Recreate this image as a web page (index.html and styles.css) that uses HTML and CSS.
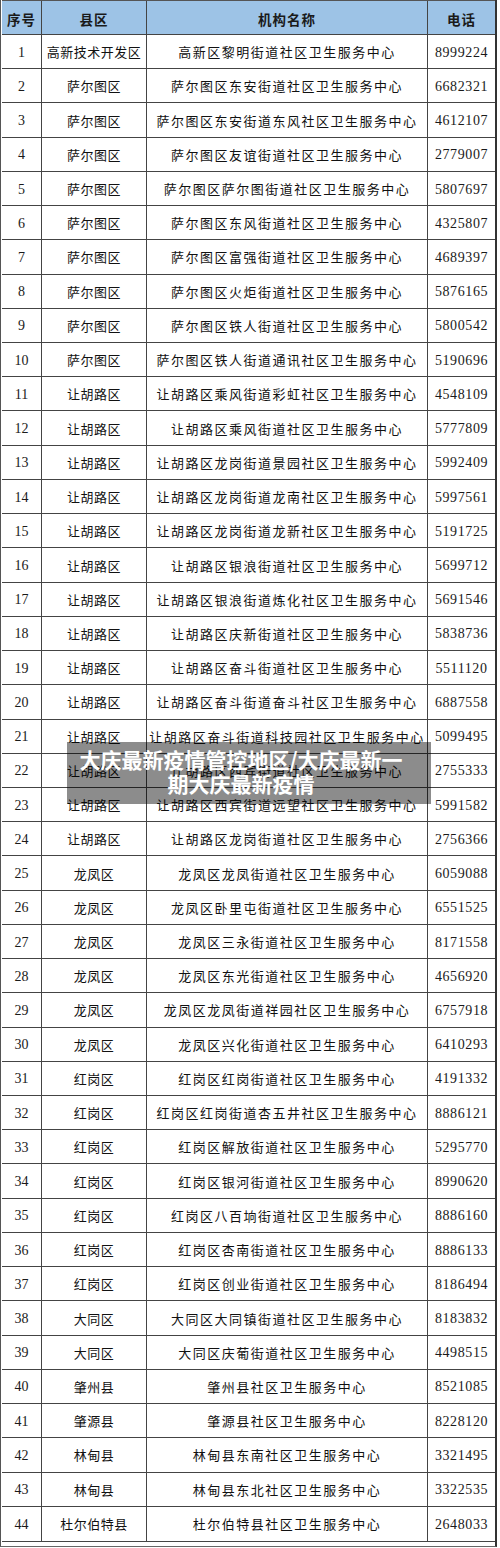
FILE: index.html
```html
<!DOCTYPE html>
<html lang="zh-CN">
<head>
<meta charset="utf-8">
<title>大庆最新疫情管控地区</title>
<link rel="stylesheet" href="styles.css">
</head>
<body>
<div class="sheet">
  <div class="frame">
    <div class="grid">
      <div class="cell head">序号</div><div class="cell head">县区</div><div class="cell head">机构名称</div><div class="cell head">电话</div>
      <div class="cell num">1</div><div class="cell dist">高新技术开发区</div><div class="cell org">高新区黎明街道社区卫生服务中心</div><div class="cell tel">8999224</div>
      <div class="cell num">2</div><div class="cell dist">萨尔图区</div><div class="cell org">萨尔图区东安街道社区卫生服务中心</div><div class="cell tel">6682321</div>
      <div class="cell num">3</div><div class="cell dist">萨尔图区</div><div class="cell org">萨尔图区东安街道东风社区卫生服务中心</div><div class="cell tel">4612107</div>
      <div class="cell num">4</div><div class="cell dist">萨尔图区</div><div class="cell org">萨尔图区友谊街道社区卫生服务中心</div><div class="cell tel">2779007</div>
      <div class="cell num">5</div><div class="cell dist">萨尔图区</div><div class="cell org">萨尔图区萨尔图街道社区卫生服务中心</div><div class="cell tel">5807697</div>
      <div class="cell num">6</div><div class="cell dist">萨尔图区</div><div class="cell org">萨尔图区东风街道社区卫生服务中心</div><div class="cell tel">4325807</div>
      <div class="cell num">7</div><div class="cell dist">萨尔图区</div><div class="cell org">萨尔图区富强街道社区卫生服务中心</div><div class="cell tel">4689397</div>
      <div class="cell num">8</div><div class="cell dist">萨尔图区</div><div class="cell org">萨尔图区火炬街道社区卫生服务中心</div><div class="cell tel">5876165</div>
      <div class="cell num">9</div><div class="cell dist">萨尔图区</div><div class="cell org">萨尔图区铁人街道社区卫生服务中心</div><div class="cell tel">5800542</div>
      <div class="cell num">10</div><div class="cell dist">萨尔图区</div><div class="cell org">萨尔图区铁人街道通讯社区卫生服务中心</div><div class="cell tel">5190696</div>
      <div class="cell num">11</div><div class="cell dist">让胡路区</div><div class="cell org">让胡路区乘风街道彩虹社区卫生服务中心</div><div class="cell tel">4548109</div>
      <div class="cell num">12</div><div class="cell dist">让胡路区</div><div class="cell org">让胡路区乘风街道社区卫生服务中心</div><div class="cell tel">5777809</div>
      <div class="cell num">13</div><div class="cell dist">让胡路区</div><div class="cell org">让胡路区龙岗街道景园社区卫生服务中心</div><div class="cell tel">5992409</div>
      <div class="cell num">14</div><div class="cell dist">让胡路区</div><div class="cell org">让胡路区龙岗街道龙南社区卫生服务中心</div><div class="cell tel">5997561</div>
      <div class="cell num">15</div><div class="cell dist">让胡路区</div><div class="cell org">让胡路区龙岗街道龙新社区卫生服务中心</div><div class="cell tel">5191725</div>
      <div class="cell num">16</div><div class="cell dist">让胡路区</div><div class="cell org">让胡路区银浪街道社区卫生服务中心</div><div class="cell tel">5699712</div>
      <div class="cell num">17</div><div class="cell dist">让胡路区</div><div class="cell org">让胡路区银浪街道炼化社区卫生服务中心</div><div class="cell tel">5691546</div>
      <div class="cell num">18</div><div class="cell dist">让胡路区</div><div class="cell org">让胡路区庆新街道社区卫生服务中心</div><div class="cell tel">5838736</div>
      <div class="cell num">19</div><div class="cell dist">让胡路区</div><div class="cell org">让胡路区奋斗街道社区卫生服务中心</div><div class="cell tel">5511120</div>
      <div class="cell num">20</div><div class="cell dist">让胡路区</div><div class="cell org">让胡路区奋斗街道奋斗社区卫生服务中心</div><div class="cell tel">6887558</div>
      <div class="cell num">21</div><div class="cell dist">让胡路区</div><div class="cell org">让胡路区奋斗街道科技园社区卫生服务中心</div><div class="cell tel">5099495</div>
      <div class="cell num">22</div><div class="cell dist">让胡路区</div><div class="cell org">让胡路区西宾街道社区卫生服务中心</div><div class="cell tel">2755333</div>
      <div class="cell num">23</div><div class="cell dist">让胡路区</div><div class="cell org">让胡路区西宾街道远望社区卫生服务中心</div><div class="cell tel">5991582</div>
      <div class="cell num">24</div><div class="cell dist">让胡路区</div><div class="cell org">让胡路区龙岗街道社区卫生服务中心</div><div class="cell tel">2756366</div>
      <div class="cell num">25</div><div class="cell dist">龙凤区</div><div class="cell org">龙凤区龙凤街道社区卫生服务中心</div><div class="cell tel">6059088</div>
      <div class="cell num">26</div><div class="cell dist">龙凤区</div><div class="cell org">龙凤区卧里屯街道社区卫生服务中心</div><div class="cell tel">6551525</div>
      <div class="cell num">27</div><div class="cell dist">龙凤区</div><div class="cell org">龙凤区三永街道社区卫生服务中心</div><div class="cell tel">8171558</div>
      <div class="cell num">28</div><div class="cell dist">龙凤区</div><div class="cell org">龙凤区东光街道社区卫生服务中心</div><div class="cell tel">4656920</div>
      <div class="cell num">29</div><div class="cell dist">龙凤区</div><div class="cell org">龙凤区龙凤街道祥园社区卫生服务中心</div><div class="cell tel">6757918</div>
      <div class="cell num">30</div><div class="cell dist">龙凤区</div><div class="cell org">龙凤区兴化街道社区卫生服务中心</div><div class="cell tel">6410293</div>
      <div class="cell num">31</div><div class="cell dist">红岗区</div><div class="cell org">红岗区红岗街道社区卫生服务中心</div><div class="cell tel">4191332</div>
      <div class="cell num">32</div><div class="cell dist">红岗区</div><div class="cell org">红岗区红岗街道杏五井社区卫生服务中心</div><div class="cell tel">8886121</div>
      <div class="cell num">33</div><div class="cell dist">红岗区</div><div class="cell org">红岗区解放街道社区卫生服务中心</div><div class="cell tel">5295770</div>
      <div class="cell num">34</div><div class="cell dist">红岗区</div><div class="cell org">红岗区银河街道社区卫生服务中心</div><div class="cell tel">8990620</div>
      <div class="cell num">35</div><div class="cell dist">红岗区</div><div class="cell org">红岗区八百垧街道社区卫生服务中心</div><div class="cell tel">8886160</div>
      <div class="cell num">36</div><div class="cell dist">红岗区</div><div class="cell org">红岗区杏南街道社区卫生服务中心</div><div class="cell tel">8886133</div>
      <div class="cell num">37</div><div class="cell dist">红岗区</div><div class="cell org">红岗区创业街道社区卫生服务中心</div><div class="cell tel">8186494</div>
      <div class="cell num">38</div><div class="cell dist">大同区</div><div class="cell org">大同区大同镇街道社区卫生服务中心</div><div class="cell tel">8183832</div>
      <div class="cell num">39</div><div class="cell dist">大同区</div><div class="cell org">大同区庆葡街道社区卫生服务中心</div><div class="cell tel">4498515</div>
      <div class="cell num">40</div><div class="cell dist">肇州县</div><div class="cell org">肇州县社区卫生服务中心</div><div class="cell tel">8521085</div>
      <div class="cell num">41</div><div class="cell dist">肇源县</div><div class="cell org">肇源县社区卫生服务中心</div><div class="cell tel">8228120</div>
      <div class="cell num">42</div><div class="cell dist">林甸县</div><div class="cell org">林甸县东南社区卫生服务中心</div><div class="cell tel">3321495</div>
      <div class="cell num">43</div><div class="cell dist">林甸县</div><div class="cell org">林甸县东北社区卫生服务中心</div><div class="cell tel">3322535</div>
      <div class="cell num">44</div><div class="cell dist">杜尔伯特县</div><div class="cell org">杜尔伯特县社区卫生服务中心</div><div class="cell tel">2648033</div>
    </div>
  </div>
  <div class="caption"><div class="caption-text">大庆最新疫情管控地区/大庆最新一<br>期大庆最新疫情</div></div>
</div>
</body>
</html>
```

FILE: styles.css
```css
html, body {
  margin: 0;
  padding: 0;
  background: #ffffff;
}

.sheet {
  position: relative;
  width: 500px;
  height: 1548px;
  overflow: hidden;
}

.frame {
  width: 497px;
  height: 1547px;
  box-sizing: border-box;
  border-left: 1px solid #555;
  border-right: 2px solid #333;
  border-bottom: 1px solid #666;
  padding-left: 1px;
}

.grid {
  display: grid;
  grid-template-columns: 40px 105px 281px 1fr;
  grid-template-rows: 34px repeat(44, 1fr);
  height: 1542px;
  box-sizing: border-box;
  border-top: 1px solid #555;
  border-bottom: 1px solid #444;
}

.cell {
  display: flex;
  align-items: center;
  justify-content: center;
  border-right: 1px solid #444;
  border-bottom: 1px solid #444;
  color: #111;
  white-space: nowrap;
  overflow: hidden;
  font-family: "Noto Sans CJK SC", "Liberation Serif", sans-serif;
  font-size: 13px;
}

.cell:nth-child(4n) {
  border-right: none;
}

.cell:nth-last-child(-n+4) {
  border-bottom: none;
}

.head {
  background: #9dc3e6;
  font-weight: bold;
  font-size: 13.5px;
  letter-spacing: 1px;
  padding-top: 3px;
  color: #1a1a1a;
}

.num {
  font-family: "Liberation Serif", serif;
  font-size: 14px;
  padding-top: 2px;
  color: #1a1a1a;
}

.dist {
  letter-spacing: 0.5px;
  font-size: 13px;
}

.org {
  letter-spacing: 1.5px;
  font-size: 13px;
}

.tel {
  font-family: "Liberation Serif", serif;
  font-size: 14px;
  letter-spacing: 0.6px;
  padding-top: 2px;
  color: #1a1a1a;
}

.caption {
  position: absolute;
  left: 67px;
  top: 742px;
  width: 364px;
  height: 62px;
  background: rgba(0, 0, 0, 0.45);
  box-sizing: border-box;
  padding: 5px 0 0 11px;
}

.caption-text {
  width: 326px;
  text-align: center;
  white-space: nowrap;
  color: #ffffff;
  font-family: "Noto Sans CJK SC", sans-serif;
  font-weight: bold;
  font-size: 21px;
  line-height: 24px;
}
```
